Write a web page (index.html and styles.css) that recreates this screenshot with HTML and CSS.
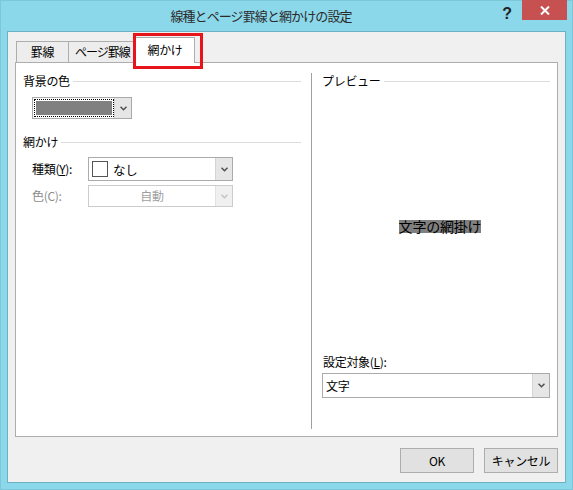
FILE: index.html
```
<!DOCTYPE html>
<html lang="ja">
<head>
<meta charset="utf-8">
<title>線種とページ罫線と網かけの設定</title>
<link rel="stylesheet" href="styles.css">
</head>
<body>
<div class="window">
  <div class="titlebar">
    <div class="title">線種とページ罫線と網かけの設定</div>
    <div class="help">?</div>
    <div class="close"><svg width="10" height="9" viewBox="0 0 10 9"><path d="M1 0.5 L9 8.5 M9 0.5 L1 8.5" stroke="#fff" stroke-width="2" fill="none"/></svg></div>
  </div>
  <div class="client">
    <div class="tabs">
      <div class="tab t1">罫線</div>
      <div class="tab t2">ページ罫線</div>
      <div class="tab sel">網かけ</div>
    </div>
    <div class="panel">
      <div class="col-left">
        <div class="heading"><span>背景の色</span><i></i></div>
        <div class="color-combo">
          <div class="color-focus"><div class="swatch"></div></div>
          <div class="drop"><svg width="7" height="5" viewBox="0 0 7 5"><path d="M0.5 0.8 L3.5 3.8 L6.5 0.8" stroke="#505050" stroke-width="1.5" fill="none"/></svg></div>
        </div>
        <div class="heading h2"><span>網かけ</span><i></i></div>
        <div class="row">
          <div class="lbl">種類(<u>Y</u>):</div>
          <div class="combo tall">
            <span class="box"></span><span class="val">なし</span>
            <div class="drop"><svg width="7" height="5" viewBox="0 0 7 5"><path d="M0.5 0.8 L3.5 3.8 L6.5 0.8" stroke="#505050" stroke-width="1.5" fill="none"/></svg></div>
          </div>
        </div>
        <div class="row row2">
          <div class="lbl dis">色(C):</div>
          <div class="combo disabled">
            <span class="val center">自動</span>
            <div class="drop"><svg width="7" height="5" viewBox="0 0 7 5"><path d="M0.5 0.8 L3.5 3.8 L6.5 0.8" stroke="#C4C4C4" stroke-width="1.5" fill="none"/></svg></div>
          </div>
        </div>
      </div>
      <div class="col-right">
        <div class="heading"><span>プレビュー</span><i></i></div>
        <div class="preview"><span class="sample">文字の網掛け</span></div>
        <div class="target-label">設定対象(<u>L</u>):</div>
        <div class="combo wide">
          <span class="val">文字</span>
          <div class="drop"><svg width="7" height="5" viewBox="0 0 7 5"><path d="M0.5 0.8 L3.5 3.8 L6.5 0.8" stroke="#505050" stroke-width="1.5" fill="none"/></svg></div>
        </div>
      </div>
    </div>
    <div class="buttons">
      <button class="btn">OK</button>
      <button class="btn">キャンセル</button>
    </div>
    <div class="highlight"></div>
  </div>
</div>
</body>
</html>
```
FILE: styles.css
```
* { box-sizing: border-box; }
html, body { margin: 0; padding: 0; }
body {
  font-family: "Noto Sans CJK JP", "Noto Sans", sans-serif;
  font-size: 12px;
  line-height: 16px;
  letter-spacing: -0.3px;
  color: #000;
  background: #8BD8EA;
}
.window {
  width: 573px;
  height: 490px;
  border: 1px solid #7CC8DA;
  background: #8BD8EA;
  display: flex;
  flex-direction: column;
}
.titlebar {
  height: 30px;
  display: flex;
  align-items: flex-start;
  padding-right: 5px;
}
.title {
  flex: 1;
  text-align: center;
  padding-left: 24px;
  font-size: 13px;
  letter-spacing: -0.9px;
  line-height: 30px;
  color: #2B2B2B;
}
.help {
  width: 20px;
  margin-right: 5px;
  text-align: center;
  font-family: "Liberation Sans", sans-serif;
  font-weight: bold;
  font-size: 16px;
  line-height: 26px;
  color: #222;
}
.close {
  width: 45px;
  height: 20px;
  margin-top: -1px;
  background: #C75050;
  display: flex;
  align-items: center;
  justify-content: center;
}
.client {
  position: relative;
  margin: 0 6px;
  height: 452px;
  border: 1px solid #6DB2C3;
  background: #F0F0F0;
  padding: 5px 7px 0 7px;
}
.tabs {
  height: 25px;
  display: flex;
  align-items: flex-end;
  padding-left: 1px;
}
.tab {
  height: 21px;
  border: 1px solid #ADADAD;
  border-bottom: none;
  background: #EDEDED;
  text-align: center;
  line-height: 20px;
}
.t1 { width: 53px; }
.t2 { width: 69px; margin-left: -1px; letter-spacing: -1px; }
.tab.sel {
  width: 60px;
  height: 26px;
  margin-left: -2px;
  margin-bottom: -1px;
  background: #fff;
  position: relative;
  z-index: 1;
  line-height: 24px;
}
.panel {
  width: 543px;
  height: 375px;
  border: 1px solid #ADADAD;
  background: #fff;
  padding: 10px 7px 7px 7px;
  display: flex;
}
.col-left {
  width: 288px;
  padding-right: 10px;
}
.col-right {
  flex: 1;
  border-left: 1px solid #A0A0A0;
  padding-left: 10px;
  display: flex;
  flex-direction: column;
}
.heading {
  height: 16px;
  display: flex;
  align-items: center;
}
.heading i {
  flex: 1;
  height: 1px;
  background: #DCDCDC;
  margin-left: 3px;
}
.heading.h2 { margin-top: 15px; }
.color-combo {
  margin: 8px 0 0 9px;
  width: 100px;
  height: 22px;
  border: 1px solid #A9A9A9;
  display: flex;
  background: #fff;
}
.color-focus {
  margin: 1px 0 1px 1px;
  border: 1px dotted #000;
  padding: 1px;
  width: 80px;
}
.swatch {
  width: 100%;
  height: 100%;
  background: #808080;
}
.drop {
  margin-left: auto;
  width: 17px;
  align-self: stretch;
  background: #E6E6E6;
  border-left: 1px solid #D4D4D4;
  display: flex;
  align-items: center;
  justify-content: center;
}
.row {
  display: flex;
  align-items: center;
  margin-top: 7px;
  padding-left: 9px;
}
.row.row2 { margin-top: 4px; }
.lbl { width: 56px; }
.lbl.dis { color: #8C8C8C; }
.combo {
  width: 145px;
  height: 22px;
  border: 1px solid #ABABAB;
  background: #fff;
  display: flex;
  align-items: center;
}
.combo.tall { height: 24px; }
.box {
  width: 16px;
  height: 16px;
  border: 1px solid #555;
  margin-left: 3px;
}
.val { margin-left: 5px; padding-top: 2px; font-size: 12.5px; }
.val.center {
  flex: 1;
  text-align: center;
  margin-left: 0;
  padding-top: 0;
  font-size: 12px;
  color: #A0A0A0;
}
.combo.disabled { border-color: #CCCCCC; }
.combo.disabled .drop { background: #F0F0F0; border-left-color: #E2E2E2; }
.preview {
  flex: 1;
  display: flex;
  align-items: center;
  justify-content: center;
  padding-top: 10px;
  padding-left: 8px;
}
.sample {
  display: inline-block;
  height: 13px;
  line-height: 13px;
  font-size: 14px;
  letter-spacing: -0.2px;
  background: #808080;
  color: #000;
}
.target-label { height: 16px; padding-left: 1px; }
.combo.wide {
  width: 228px;
  height: 25px;
  margin-top: 3px;
  margin-bottom: 31px;
}
.combo.wide .val { margin-left: 3px; padding-top: 0; font-size: 12px; }
.buttons {
  display: flex;
  justify-content: flex-end;
  gap: 10px;
  margin-top: 11px;
}
.btn {
  width: 74px;
  height: 25px;
  border: 1px solid #ADADAD;
  background: #E1E1E1;
  font-family: inherit;
  font-size: 12px;
  letter-spacing: -0.3px;
  color: #000;
  padding: 0;
}
.highlight {
  position: absolute;
  left: 125px;
  top: 1px;
  width: 70px;
  height: 36px;
  border: 3px solid #E8141C;
  z-index: 2;
}
```
